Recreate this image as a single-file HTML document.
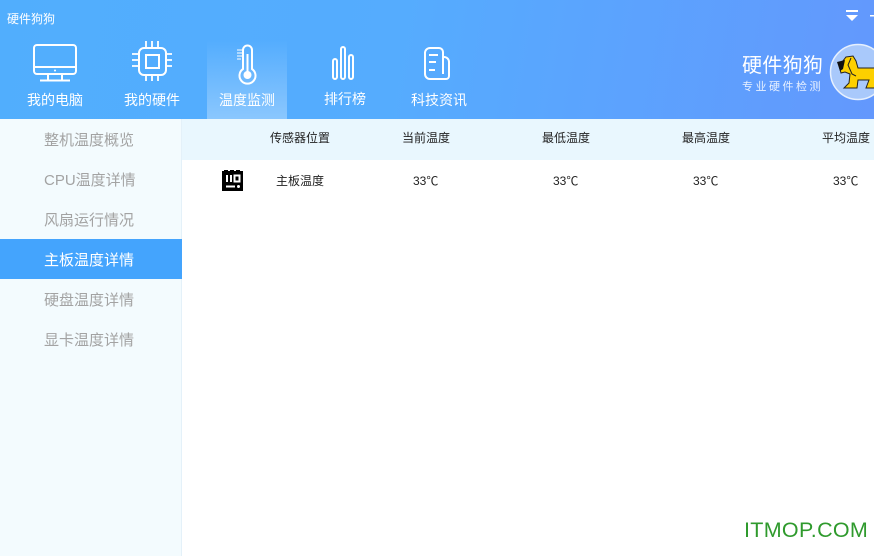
<!DOCTYPE html>
<html lang="zh"><head><meta charset="utf-8"><style>
html,body{margin:0;padding:0}
body{width:874px;height:556px;position:relative;overflow:hidden;background:#fff;font-family:"Liberation Sans","Noto Sans CJK SC",sans-serif}
.a{position:absolute;white-space:nowrap}
#top{left:0;top:0;width:874px;height:119px;background:linear-gradient(100deg,#51aefd 0%,#55acfe 45%,#6398fd 100%)}
#side{left:0;top:119px;width:181px;height:437px;background:#f3fbfe;border-right:1px solid #e4f1f9}
.s{left:44px;width:137px;font-size:15px;line-height:40px;height:40px;color:#a3a3a3}
.n{color:#fff;font-size:14px;line-height:16px;text-align:center;width:80px;top:92px}
.h{font-size:12px;line-height:16px;color:#222;top:130px}
.c{font-size:12px;line-height:16px;color:#222;top:173px}
svg{position:absolute;overflow:visible}
</style></head><body>
<div class="a" id="top"></div>
<div class="a" style="left:207px;top:40px;width:80px;height:79px;background:linear-gradient(180deg,rgba(255,255,255,0) 0%,rgba(255,255,255,.32) 100%)"></div>
<div class="a" style="left:7px;top:11px;font-size:12px;line-height:16px;color:#fff">硬件狗狗</div>

<svg style="left:0;top:0" width="874" height="119" fill="none" stroke="#fff" stroke-width="2">
<rect x="34" y="45" width="42" height="29" rx="3"/><path d="M34 67H76M48 74V80M62 74V80M40 80.500H70"/><circle cx="55" cy="70.500" r="1" fill="#fff" stroke="none"/>
<rect x="139" y="48" width="27" height="27" rx="5"/><rect x="146" y="55" width="13" height="13"/>
<path d="M146 41V48M152 41V48M158 41V48M146 75V81M152 75V81M158 75V81M132 54H139M132 60H139M132 66H139M166 54H172M166 60H172M166 66H172" stroke-width="1.800"/>
<path d="M243 69V50a4.500 4.500 0 0 1 9 0V69a8 8 0 1 1-9 0Z"/><path d="M247.500 54V74"/><circle cx="247.500" cy="75" r="4" fill="#fff" stroke="none"/>
<path d="M237 50H242M237 53H242M237 56H242M237 59H241" stroke-width="1"/>
<rect x="333" y="59" width="4" height="20" rx="2"/><rect x="341" y="47" width="4" height="32" rx="2"/><rect x="349" y="55" width="4" height="24" rx="2"/>
<path d="M444 57a5 5 0 0 1 5 5V76a3 3 0 0 1-3 3H430a5 5 0 0 1-5-5V53a5 5 0 0 1 5-5H439a4 4 0 0 1 4 4V74"/>
<path d="M429 55H438M429 62H436M429 70H435"/>
</svg>

<div class="a n" style="left:15px">我的电脑</div>
<div class="a n" style="left:112px">我的硬件</div>
<div class="a n" style="left:207px">温度监测</div>
<div class="a n" style="left:305px;top:91px">排行榜</div>
<div class="a n" style="left:399px">科技资讯</div>

<svg style="left:0;top:0" width="874" height="119">
<path d="M846 10H858V12H846ZM846 15H858L852 21Z" fill="#fff"/><rect x="870" y="15" width="4" height="1.500" fill="#fff"/>
<circle cx="858" cy="72" r="27.500" fill="#a9c9fb" stroke="#e6f0fe" stroke-width="1.500"/>
<path d="M846 57L853 56L856 61L858 68L876 68V88H866L869 80H858L857 88H844L849 83L850 74L845 72L841 73L839 66Z" fill="#fdd000" stroke="#222" stroke-width="1"/>
<path d="M837 62L845 60L843 69L840 71Z" fill="#111"/>
<path d="M851 58L848 65L852 74L856 76" fill="none" stroke="#222" stroke-width="1"/>
</svg>
<div class="a" style="left:742px;top:53px;font-size:20px;line-height:26px;color:#fff;letter-spacing:.3px">硬件狗狗</div>
<div class="a" style="left:742px;top:80px;font-size:11px;line-height:14px;color:#e8f1ff;letter-spacing:2.500px">专业硬件检测</div>

<div class="a" id="side"></div>
<div class="a s" style="top:121px">整机温度概览</div>
<div class="a s" style="top:161px">CPU温度详情</div>
<div class="a s" style="top:201px">风扇运行情况</div>
<div class="a" style="top:239px;left:0;width:182px;height:40px;background:#44a4fd"></div>
<div class="a s" style="top:241px;color:#fff">主板温度详情</div>
<div class="a s" style="top:281px">硬盘温度详情</div>
<div class="a s" style="top:321px">显卡温度详情</div>

<div class="a" style="left:182px;top:119px;width:692px;height:41px;background:#e9f7fe"></div>
<div class="a h" style="left:270px">传感器位置</div>
<div class="a h" style="left:402px">当前温度</div>
<div class="a h" style="left:542px">最低温度</div>
<div class="a h" style="left:682px">最高温度</div>
<div class="a h" style="left:822px">平均温度</div>

<svg style="left:222px;top:170px" width="22" height="22">
<path d="M0 1H2V0H6V1H8V0H12V1H14V0H18V1H21V21H0Z" fill="#000"/>
<path d="M5 5V12M9 5V12" stroke="#fff" stroke-width="2"/><rect x="12.500" y="5.500" width="5" height="6" fill="none" stroke="#fff" stroke-width="2"/>
<path d="M4 16.500H13" stroke="#fff" stroke-width="2"/><circle cx="16.500" cy="16.500" r="1.500" fill="#fff"/>
</svg>
<div class="a c" style="left:276px">主板温度</div>
<div class="a c" style="left:413px">33℃</div>
<div class="a c" style="left:553px">33℃</div>
<div class="a c" style="left:693px">33℃</div>
<div class="a c" style="left:833px">33℃</div>

<div class="a" style="left:744px;top:518px;font-size:21.500px;line-height:24px;color:#2f9a2d;letter-spacing:.3px">ITMOP.COM</div>
</body></html>
